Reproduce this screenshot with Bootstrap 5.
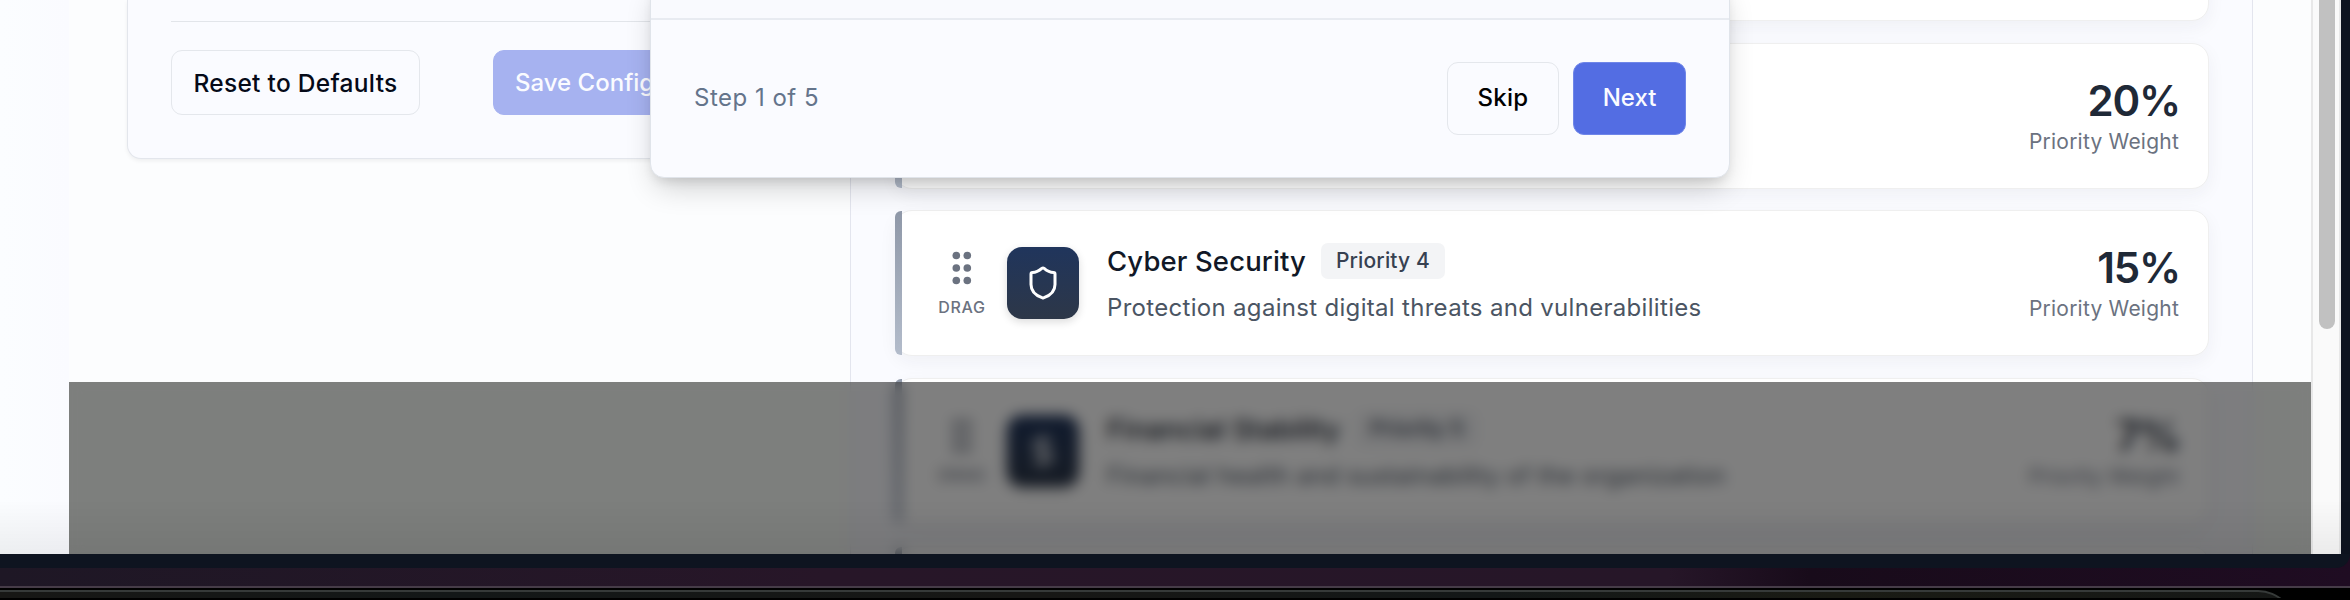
<!DOCTYPE html>
<html lang="en">
<head>
<meta charset="utf-8">
<title>Priority configuration</title>
<link href="https://cdn.jsdelivr.net/npm/bootstrap@5.3.0/dist/css/bootstrap.min.css" rel="stylesheet">
<style>
body{width:2350px;height:600px;overflow:hidden;background:#000;font-family:Inter,sans-serif;font-size:24px;line-height:1.2;color:#0b1020}
.app-window{height:554px;overflow:hidden;background:#0e1420}
.side-strip{width:69px;background:linear-gradient(90deg,#fbfdff,#fafbff)}
.main-area{width:2242px;background:linear-gradient(#fcfdfe 382px,#fbfefb 382px)}
.scroll-track{width:30px;background:#fafafa;border:solid #e8e8e8;border-width:0 2px;padding-left:6px}
.scroll-thumb{width:16px;height:329px;background:#c1c1c1;border-radius:0 0 8px 8px}
.settings-panel{width:684px;height:159px;margin-left:58px;background:#fafbff;border:1px solid #e3e6ec;border-top:0;border-radius:0 0 14px 14px;box-shadow:0 2px 4px rgba(0,0,0,.06);padding:21px 43px 0}
.settings-panel .rule{height:1px;background:#e2e5ea;margin-bottom:28px}
.btn-plain{--bs-btn-color:#050a18;--bs-btn-border-color:#e4e7ec;background:#fafbff;font-weight:500;font-size:24px;line-height:1.2;padding:0;border-radius:11px}
.btn-fill{background:#536de3;color:#fafbff;font-weight:500;font-size:24px;line-height:1.2;padding:0;border:1px solid #6f86e8;border-radius:11px}
.reset{width:249px;height:65px;font-size:24.5px;letter-spacing:.28px;padding-top:2px}
.save{width:262px;height:65px;margin-left:73px;background:#a6b2f0;border-color:#a6b2f0;text-align:left;padding:2px 0 0 21px;white-space:nowrap}
.priority-panel{width:1403px;height:600px;margin-left:39px;background:#fafbff;border:solid #e3e5ee;border-width:0 1px;padding:0 0 0 44px}
.prio{position:relative;width:1314px;height:146px;background:#fff;border:1px solid #efefef;border-radius:17px;box-shadow:0 6px 18px rgba(30,35,50,.05);margin-bottom:22px;padding:0 29px 0 43px}
.prio.first{height:60px;margin-top:-39px}
.prio.second{margin-bottom:21px}
.prio::before{content:"";position:absolute;left:-1px;top:0;bottom:0;width:7px;border-radius:6px 0 0 6px;background:linear-gradient(#8f98a8,#b3bccb)}
.grip{width:46px;color:#6b7280;padding-top:3px}
.grip small{font-size:16px;font-weight:500;letter-spacing:.7px;line-height:20px;margin-top:12px}
.grip svg{margin-top:-2px}
.tile{width:72px;height:72px;margin-left:22px;border-radius:15px;background:linear-gradient(#20355c,#2d3748);box-shadow:0 3px 9px rgba(0,0,0,.14)}
.info{margin-left:28px}
.prio-title{font-size:27.5px;font-weight:500;line-height:36px;color:#111827;letter-spacing:.12px}
.prio-tag{height:36px;margin-left:15px;padding:0 15px;border-radius:7px;background:#f3f4f6;color:#374151;font-size:21px;font-weight:500;line-height:35px;letter-spacing:.15px}
.prio-desc{font-size:24px;line-height:30px;color:#4b5563;margin-top:14px;letter-spacing:.31px}
.pct{font-size:42px;font-weight:600;line-height:48px;color:#1f2937;letter-spacing:-1.2px;margin-right:-1px}
.pct-label{font-size:21px;line-height:26px;color:#6b7280;letter-spacing:.22px;margin-top:4px}
.tour{position:absolute;z-index:3;left:581px;top:-20px;width:1080px;height:198px;background:#fafbff;border:1px solid #e0e4ea;border-radius:14px;box-shadow:0 14px 30px -6px rgba(0,0,0,.2),0 6px 12px -4px rgba(0,0,0,.12)}
.tour-body{height:37px;background:#f9fafe}
.tour-foot{height:159px;border-top:2px solid #e8ebf1;padding:0 43px}
.step{color:#64748b;letter-spacing:.5px}
.skip{width:112px;height:73px;color:#000;letter-spacing:.25px}
.next{width:113px;height:73px;margin-left:14px}
.veil{position:absolute;z-index:2;left:0;right:0;top:382px;height:172px;background:rgba(0,0,0,.5);backdrop-filter:blur(7px)}
.foot-shade{position:absolute;z-index:4;left:0;bottom:0;width:100%;height:54px;background:linear-gradient(rgba(0,0,0,0),rgba(0,0,0,.06))}
.bezel{height:14px;background:#0e1420;border-radius:0 0 14px 0}
.wall{height:32px;background:linear-gradient(90deg,#1e1725 0,#271628 35%,#261628 71%,#180b1a 77%,#1f0c22 100%)}
.edge{height:2px;background:#463c48}
.dock-clip{height:10px;padding-top:2px;overflow:hidden}
.dock{width:2296px;height:60px;background:linear-gradient(90deg,#171715,#131717 20%,#171715 45%,#131717 65%,#1a1b14 80%,#151716);border:2px solid #363a39;border-left:0;border-radius:0 38px 0 0}
</style>
</head>
<body>
<div class="app-window d-flex position-relative">
  <aside class="side-strip flex-shrink-0"></aside>
  <main class="main-area d-flex align-items-start flex-shrink-0 position-relative overflow-hidden">
    <section class="settings-panel flex-shrink-0">
      <div class="rule"></div>
      <div class="d-flex">
        <button class="btn btn-plain reset">Reset to Defaults</button>
        <button class="btn btn-fill save">Save Config</button>
      </div>
    </section>
    <section class="priority-panel flex-shrink-0">
      <article class="prio first"></article>
      <article class="prio second d-flex align-items-center">
        <div class="ms-auto text-end"><div class="pct">20%</div><div class="pct-label">Priority Weight</div></div>
      </article>
      <article class="prio d-flex align-items-center">
        <div class="grip d-flex flex-column align-items-center">
          <svg width="20" height="34" fill="#6b7280"><circle cx="4.3" cy="4.5" r="3.8"/><circle cx="15.3" cy="4.5" r="3.8"/><circle cx="4.3" cy="17" r="3.8"/><circle cx="15.3" cy="17" r="3.8"/><circle cx="4.3" cy="29.5" r="3.8"/><circle cx="15.3" cy="29.5" r="3.8"/></svg>
          <small>DRAG</small>
        </div>
        <div class="tile d-flex align-items-center justify-content-center">
          <svg width="36" height="36" viewBox="0 0 24 24" fill="none" stroke="#fff" stroke-width="2" stroke-linecap="round" stroke-linejoin="round"><path d="M20 13c0 5-3.5 7.500-7.660 8.950a1 1 0 0 1-.67-.01C7.500 20.500 4 18 4 13V6a1 1 0 0 1 1-1c2 0 4.500-1.200 6.240-2.720a1.170 1.170 0 0 1 1.520 0C14.510 3.810 17 5 19 5a1 1 0 0 1 1 1z"/></svg>
        </div>
        <div class="info">
          <div class="d-flex"><div class="prio-title">Cyber Security</div><span class="prio-tag">Priority 4</span></div>
          <div class="prio-desc">Protection against digital threats and vulnerabilities</div>
        </div>
        <div class="ms-auto text-end"><div class="pct">15%</div><div class="pct-label">Priority Weight</div></div>
      </article>
      <article class="prio d-flex align-items-center">
        <div class="grip d-flex flex-column align-items-center">
          <svg width="20" height="34" fill="#6b7280"><circle cx="4.3" cy="4.5" r="3.8"/><circle cx="15.3" cy="4.5" r="3.8"/><circle cx="4.3" cy="17" r="3.8"/><circle cx="15.3" cy="17" r="3.8"/><circle cx="4.3" cy="29.5" r="3.8"/><circle cx="15.3" cy="29.5" r="3.8"/></svg>
          <small>DRAG</small>
        </div>
        <div class="tile d-flex align-items-center justify-content-center">
          <svg width="30" height="36" viewBox="2 0 20 24" fill="none" stroke="#fff" stroke-width="2" stroke-linecap="round" stroke-linejoin="round"><path d="M12 2v20M17 5H9.500a3.500 3.500 0 0 0 0 7h5a3.500 3.500 0 0 1 0 7H6"/></svg>
        </div>
        <div class="info">
          <div class="d-flex"><div class="prio-title">Financial Stability</div><span class="prio-tag">Priority 5</span></div>
          <div class="prio-desc">Financial health and sustainability of the organization</div>
        </div>
        <div class="ms-auto text-end"><div class="pct">7%</div><div class="pct-label">Priority Weight</div></div>
      </article>
      <article class="prio"></article>
    </section>
    <div class="veil"></div>
    <div class="tour">
      <div class="tour-body"></div>
      <div class="tour-foot d-flex align-items-center">
        <span class="step me-auto">Step 1 of 5</span>
        <button class="btn btn-plain skip">Skip</button>
        <button class="btn btn-fill next">Next</button>
      </div>
    </div>
  </main>
  <div class="scroll-track flex-shrink-0"><div class="scroll-thumb"></div></div>
  <div class="foot-shade"></div>
</div>
<div class="wall"><div class="bezel"></div></div>
<div class="edge"></div>
<div class="dock-clip"><div class="dock"></div></div>
<script src="https://cdn.jsdelivr.net/npm/bootstrap@5.3.0/dist/js/bootstrap.bundle.min.js"></script>
</body>
</html>
